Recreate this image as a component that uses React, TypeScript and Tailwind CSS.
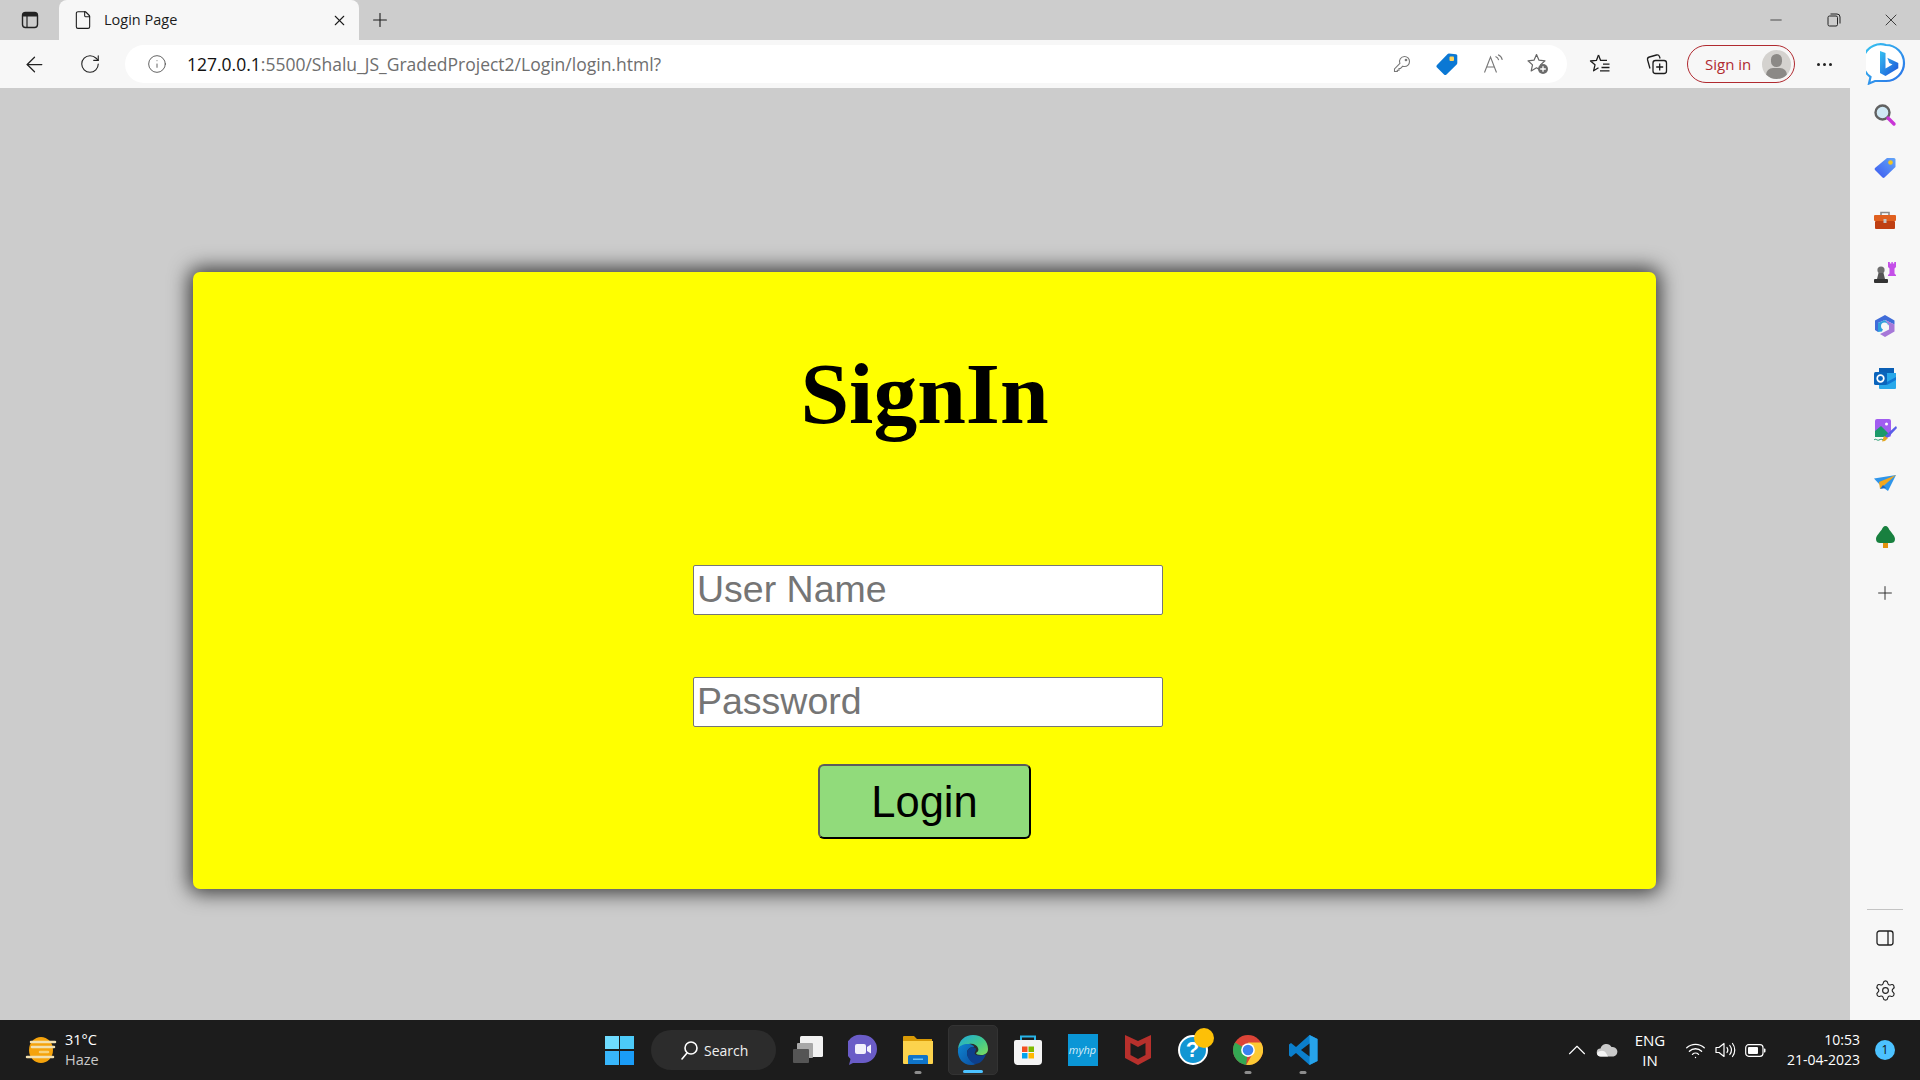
import React from "react";
import { ArrowLeft, RotateCw, Info, Plus, X, Minus, File, Settings, ChevronUp, Wifi } from "lucide-react";

// --- Browser chrome icons ---

const SidebarToggle = () => (
  <svg width="18" height="18" viewBox="0 0 18 18" fill="none">
    <rect x="1.5" y="1.5" width="15" height="15" rx="3" stroke="#222" strokeWidth="1.4" />
    <path d="M1.5 4.5a3 3 0 0 1 3-3h9a3 3 0 0 1 3 3v1h-15z" fill="#222" />
    <path d="M6 5v11" stroke="#222" strokeWidth="1.2" />
  </svg>
);

const RestoreIcon = () => (
  <svg width="14" height="14" viewBox="0 0 14 14" fill="none" stroke="#222" strokeWidth="1">
    <rect x="1" y="3" width="9.5" height="10" rx="1.5" />
    <path d="M3.5 1h6.5a3 3 0 0 1 3 3v6.5" />
  </svg>
);

const KeyIcon = () => (
  <svg width="18" height="18" viewBox="0 0 18 18" fill="none" stroke="#777" strokeWidth="1.1">
    <path d="M11.5 1.5a5 5 0 0 1 0 10c-.6 0-1.2-.1-1.7-.3L7.5 13.5H6v1.7H4.3v1.3H1.5v-2.6l5.4-5.4a5 5 0 0 1 4.6-7z" />
    <circle cx="13" cy="5" r=".8" fill="#777" />
  </svg>
);

const TagIcon = () => (
  <svg width="22" height="24" viewBox="0 0 22 24">
    <path d="M13 1.5 20 2.2a1.5 1.5 0 0 1 1.3 1.4V11a2 2 0 0 1-.6 1.4L10.5 22.4a1.8 1.8 0 0 1-2.5 0L1 15.4a1.8 1.8 0 0 1 0-2.5L11.4 2.2A2 2 0 0 1 13 1.5z" fill="#0b78d4" />
    <rect x="13.5" y="4.5" width="4.5" height="4.5" rx="1" fill="#ffd45c" />
  </svg>
);

const ReadAloudIcon = () => (
  <svg width="24" height="20" viewBox="0 0 22 20" fill="none" stroke="#777" strokeWidth="1.1">
    <path d="M1.5 18.5 7.5 3l6 15.5M3.6 13h7.8" />
    <path d="M12.5 2.5c1.6.6 2.8 2 3.2 3.7M15 .8c2.2.8 3.8 2.8 4.3 5" />
  </svg>
);

const FavAddIcon = () => (
  <svg width="24" height="24" viewBox="0 0 24 24" fill="none">
    <path d="M10.5 2.5 13 8.2l6 .6-4.5 4.1 1.2 6-5.2-3.1-5.3 3.1 1.3-6L2 8.8l6-.6z" stroke="#666" strokeWidth="1.2" strokeLinejoin="round" />
    <circle cx="17" cy="17" r="5" fill="#6b6b6b" />
    <path d="M17 14.2v5.6M14.2 17h5.6" stroke="#fff" strokeWidth="1.3" />
  </svg>
);

const FavoritesIcon = () => (
  <svg width="22" height="22" viewBox="0 0 22 22" fill="none" stroke="#1c1c1c" strokeWidth="1.3" strokeLinejoin="round">
    <path d="M9.5 2 7.4 7.4 1.5 8l4.5 3.8-1.4 6 4.9-3" />
    <path d="M9.5 2l2.1 5.4H18" />
    <path d="M14 11.2h6.5M12.5 14.5h8M11 17.8h9.5" />
  </svg>
);

const CollectionsIcon = () => (
  <svg width="22" height="22" viewBox="0 0 22 22" fill="none" stroke="#1c1c1c" strokeWidth="1.3">
    <rect x="7" y="7.5" width="13.5" height="13" rx="2.5" />
    <path d="M13.7 10.5v7M10.2 14h7" />
    <path d="M4 15.5 1.6 7a2.5 2.5 0 0 1 1.8-3L10.5 2a2.5 2.5 0 0 1 3 1.6l.6 1.9" />
  </svg>
);

const BingIcon = () => (
  <svg width="40" height="42" viewBox="0 0 40 42" fill="none">
    <defs>
      <linearGradient id="bingRing" x1="0" y1="0" x2="1" y2="1">
        <stop offset="0" stopColor="#36c5f0" />
        <stop offset="1" stopColor="#2b6fe8" />
      </linearGradient>
      <linearGradient id="bingB" x1="0" y1="0" x2="1" y2="1">
        <stop offset="0" stopColor="#35c1f1" />
        <stop offset="1" stopColor="#1b4fd8" />
      </linearGradient>
    </defs>
    <path d="M20 2a18 18 0 0 1 0 36H9l-6 2.5 1.5-6.5A18 18 0 0 1 20 2z" fill="#fff" stroke="url(#bingRing)" strokeWidth="2.2" />
    <path d="M14 8l5.5 2v15.5l7-4-3.2-1.6-2-5.2 11 5.2v5.4L19.5 33 14 30z" fill="url(#bingB)" />
  </svg>
);

// --- Edge sidebar icons ---

const SideSearch = () => (
  <svg width="24" height="24" viewBox="0 0 24 24">
    <circle cx="9.5" cy="9.5" r="7" fill="#cfe8f5" stroke="#616161" strokeWidth="2.4" />
    <path d="M15 15l6 6" stroke="#c935d6" strokeWidth="3.4" strokeLinecap="round" />
  </svg>
);

const SideTag = () => (
  <svg width="24" height="24" viewBox="0 0 24 24">
    <defs>
      <linearGradient id="sideTag" x1="0" y1="1" x2="1" y2="0">
        <stop offset="0" stopColor="#3b58f0" />
        <stop offset="1" stopColor="#63a6f8" />
      </linearGradient>
    </defs>
    <path d="M14 2h7a1.5 1.5 0 0 1 1.5 1.5V11L11.5 21.5a1.5 1.5 0 0 1-2 0L2 14a1.5 1.5 0 0 1 0-2z" fill="url(#sideTag)" />
    <circle cx="17.5" cy="6.5" r="2.3" fill="#f5c51e" />
  </svg>
);

const SideToolbox = () => (
  <svg width="24" height="24" viewBox="0 0 24 24">
    <path d="M8 7V3.5h8V7" fill="none" stroke="#8a8a8a" strokeWidth="1.6" />
    <rect x="1" y="6" width="22" height="6" rx="1" fill="#e0601f" />
    <rect x="2" y="12" width="20" height="8" rx="1" fill="#bf3f12" />
    <rect x="10.5" y="10" width="3" height="4" fill="#c4c4c4" />
  </svg>
);

const SideChess = () => (
  <svg width="24" height="24" viewBox="0 0 24 24">
    <path d="M15 1h1.800v1.600h1.600V1h1.400v1.600h1.400V1H23v5l-1.500 1.500v5l1.500 1.500v1h-8v-1l1.500-1.500v-5L15 6z" fill="#c44fe8" />
    <circle cx="8" cy="9" r="3.6" fill="#6e6e6e" />
    <path d="M5.5 12h5l1.500 6H4z" fill="#555" />
    <rect x="1" y="18" width="14" height="4" rx="1" fill="#333" />
  </svg>
);

const SideM365 = () => (
  <svg width="24" height="24" viewBox="0 0 24 24">
    <path d="M12 1 21.5 6.5v4L12 6 5 9v9l-3-2V6.5z" fill="#3f6cd9" />
    <path d="M12 6l9.500 4.500v7L12 23l-5-3 9-4.500V11z" fill="#a678d8" />
    <path d="M5 9l7-3 4 5-5 1.500-2 5L5 18z" fill="#2f9fdc" />
    <circle cx="11.5" cy="12" r="3.5" fill="#f7f7f7" />
  </svg>
);

const SideOutlook = () => (
  <svg width="24" height="24" viewBox="0 0 24 24">
    <rect x="6" y="1" width="15" height="5" fill="#0a5fb5" />
    <path d="M6 6h17v15a1 1 0 0 1-1 1H7a1 1 0 0 1-1-1z" fill="#28a8ea" />
    <path d="M12 16l11-6v3l-9 5z" fill="#0f78d4" />
    <rect x="1" y="5" width="13" height="13" rx="1.5" fill="#0a64bc" />
    <circle cx="7.5" cy="11.5" r="3.3" fill="none" stroke="#fff" strokeWidth="1.7" />
  </svg>
);

const SideImage = () => (
  <svg width="24" height="24" viewBox="0 0 24 24">
    <rect x="2" y="0" width="16" height="18" rx="2" fill="#a15df0" />
    <circle cx="13.5" cy="5" r="1.5" fill="#fff" />
    <path d="M2 12l6-5 7 7v4H2z" fill="#1c9a6a" />
    <path d="M23 7 13 16l-2 4 4-1.500L24 9z" fill="#5a5de8" />
    <path d="M11 17l4 2-3 3-3 .5z" fill="#e6a822" />
    <path d="M1 21c2-2 3 1 5 0s3-1 4 0" stroke="#1c9a6a" strokeWidth="1" fill="none" />
  </svg>
);

const SideSend = () => (
  <svg width="24" height="24" viewBox="0 0 24 24">
    <path d="M1 6.5 23 3 15 19 8 14z" fill="#2f95ea" />
    <path d="M23 3 6 10l1 7z" fill="#f2a71e" />
    <path d="M7 17l3-4 3 3z" fill="#1769c7" />
  </svg>
);

const SideTree = () => (
  <svg width="24" height="24" viewBox="0 0 24 24">
    <rect x="10" y="17" width="5" height="6" fill="#e5930f" />
    <path d="M12.500 1c2 0 3 2 4 4 1.500 2 5.500 6 5.500 9 0 3-2 4-4 4H7c-2 0-4-1-4-4 0-3 4-7 5.500-9 1-2 2-4 4-4z" fill="#18803f" />
  </svg>
);

const SplitIcon = () => (
  <svg width="18" height="16" viewBox="0 0 18 16" fill="none" stroke="#222" strokeWidth="1.3">
    <rect x="1" y="1" width="16" height="14" rx="2.5" />
    <path d="M12 1v14" />
  </svg>
);

// --- Taskbar icons ---

const WeatherIcon = () => (
  <svg width="34" height="28" viewBox="0 0 34 28">
    <ellipse cx="17" cy="14" rx="12" ry="13" fill="#f5a30c" />
    <path d="M7 6h24M8 11h22M3 21h26" stroke="#f2e0b0" strokeWidth="2.5" strokeLinecap="round" />
    <path d="M16 16h8" stroke="#f7d27a" strokeWidth="2.5" strokeLinecap="round" />
  </svg>
);

const WindowsLogo = () => (
  <div className="grid grid-cols-2 gap-[1.5px] w-[29px] h-[29px]">
    <div className="bg-[#6fdcff]" />
    <div className="bg-[#4ccaf8]" />
    <div className="bg-[#38b6fb]" />
    <div className="bg-[#1a9cf7]" />
  </div>
);

const SearchGlass = () => (
  <svg width="19" height="20" viewBox="0 0 19 20" fill="none" stroke="#fff" strokeWidth="1.6">
    <circle cx="11" cy="8" r="6" />
    <path d="M7 13 2 19" strokeLinecap="round" />
  </svg>
);

const TaskView = () => (
  <svg width="32" height="30" viewBox="0 0 32 30">
    <rect x="8" y="1" width="23" height="21" rx="1.5" fill="#f2f2f2" />
    <rect x="5" y="8" width="16" height="15" rx="1" fill="#a8a8a8" />
    <rect x="1" y="14" width="16" height="14" rx="1" fill="#555" />
  </svg>
);

const ChatIcon = () => (
  <svg width="30" height="32" viewBox="0 0 30 32">
    <path d="M15 1a14 14 0 0 1 0 28H5l-4 2 1.500-6A14 14 0 0 1 15 1z" fill="#6a5cc7" />
    <rect x="7" y="10" width="11" height="10" rx="2" fill="#f2f0fb" />
    <path d="M19 13l4-2.500v9L19 17z" fill="#f2f0fb" />
  </svg>
);

const ExplorerIcon = () => (
  <svg width="30" height="30" viewBox="0 0 30 30">
    <path d="M0 2a1 1 0 0 1 1-1h10l3 3h15v6H0z" fill="#d99a06" />
    <path d="M0 6h30v22a1 1 0 0 1-1 1H1a1 1 0 0 1-1-1z" fill="#fcd34d" />
    <path d="M5 21.5a1.5 1.5 0 0 1 1.5-1.5h17a1.5 1.5 0 0 1 1.5 1.5V29H5z" fill="#0f74c9" />
    <rect x="10" y="23.5" width="10" height="1.5" fill="#6cc1f5" />
  </svg>
);

const EdgeIcon = () => (
  <svg width="32" height="32" viewBox="0 0 32 32">
    <defs>
      <linearGradient id="edgeOuter" x1="0" y1="0" x2="1" y2="1">
        <stop offset="0" stopColor="#1ea8e0" />
        <stop offset="0.55" stopColor="#42c98b" />
        <stop offset="1" stopColor="#7fdc5e" />
      </linearGradient>
      <linearGradient id="edgeInner" x1="0" y1="0" x2="1" y2="1">
        <stop offset="0" stopColor="#0e84d0" />
        <stop offset="1" stopColor="#0c4ea0" />
      </linearGradient>
    </defs>
    <path d="M1 15C2 6 8 1 16 1c9 0 15 6 15 14 0 4-3 6-7 6-3 0-5-1-5-2 2-1 3-3 2-5-1-3-5-5-9-4C6 11 2 13 1 15z" fill="url(#edgeOuter)" />
    <path d="M1 15c1-3 5-5 10-5 4 0 6 2 6 3-5 0-7 3-7 6 0 4 4 9 9 11-2 1-4 1-5 1C6 31 0 24 1 15z" fill="url(#edgeInner)" />
    <path d="M10 19c0-3 2-5 5-6 2 0 4 1 4 2 0 2-2 4-1 5 2 2 7 2 11 0-2 6-6 10-11 10-5-2-8-7-8-11z" fill="#0d3f8c" />
  </svg>
);

const StoreIcon = () => (
  <svg width="30" height="32" viewBox="0 0 30 32">
    <path d="M8 7V2.500h14V7" fill="none" stroke="#27b4e8" strokeWidth="2" />
    <path d="M1 8a2 2 0 0 1 2-2h24a2 2 0 0 1 2 2v19a4 4 0 0 1-4 4H5a4 4 0 0 1-4-4z" fill="#f4f4f4" />
    <rect x="9" y="12.5" width="5.5" height="5.5" fill="#f25022" />
    <rect x="15.5" y="12.5" width="5.5" height="5.5" fill="#7fba00" />
    <rect x="9" y="19" width="5.5" height="5.5" fill="#00a4ef" />
    <rect x="15.5" y="19" width="5.5" height="5.5" fill="#ffb900" />
  </svg>
);

const McAfeeIcon = () => (
  <svg width="28" height="32" viewBox="0 0 28 32">
    <path d="M1 1l13 6 13-6v23l-13 7-13-7zM6.500 9v12l7.500 4 7.500-4V9L14 13z" fill="#b8302c" fillRule="evenodd" />
  </svg>
);

const HelpIcon = () => (
  <div className="relative w-[30px] h-[30px] rounded-full bg-[#1296d3] border-2 border-white flex items-center justify-center">
    <span className="font-['Liberation_Sans',sans-serif] font-bold text-[22px] leading-none text-white">?</span>
    <span className="absolute -top-[9px] left-[14px] w-[20px] h-[20px] rounded-full bg-[#fdc007]" />
  </div>
);

const ChromeIcon = () => (
  <svg width="30" height="30" viewBox="0 0 48 48">
    <circle cx="24" cy="24" r="24" fill="#db4437" />
    <path d="M24 24 3.200 12A24 24 0 0 0 21 47.800z" fill="#34a853" />
    <path d="M24 12h20.800A24 24 0 0 1 21 47.800L33 27z" fill="#fcc934" />
    <circle cx="24" cy="24" r="11" fill="#fff" />
    <circle cx="24" cy="24" r="8.5" fill="#3b82f0" />
  </svg>
);

const VSCodeIcon = () => (
  <svg width="30" height="32" viewBox="0 0 30 32">
    <path d="M21.500 1 29.500 5v22l-8 4L8 19l-5 4-2-1.500V10.500L3 9l5 4z" fill="#0b7fcc" />
    <path d="M21.500 1 29.500 5v22l-8 4z" fill="#27a3ea" />
    <path d="M21.500 9.500 13 16l8.500 6.500z" fill="#1c1c1c" />
  </svg>
);

const CloudIcon = () => (
  <svg width="22" height="14" viewBox="0 0 22 14">
    <path d="M5 13.500a4 4 0 0 1-.5-8A6 6 0 0 1 15.500 4a4.800 4.800 0 0 1 2 9.500z" fill="#c9c9c9" />
    <path d="M1 10c3-3 7-3 9 0l2 3.500H5a4 4 0 0 1-4-3.500z" fill="#f4f4f4" />
  </svg>
);

const VolumeIcon = () => (
  <svg width="21" height="18" viewBox="0 0 21 18" fill="none" stroke="#fff" strokeWidth="1.2">
    <path d="M1 6.500h3L9 2.500v13L4 11.500H1z" strokeLinejoin="round" />
    <path d="M12 6.500c1 1.500 1 3.500 0 5M14.800 4.500c2 2.700 2 6.300 0 9M17.500 2.500c3 3.800 3 9.200 0 13" strokeLinecap="round" />
  </svg>
);

const BatteryIcon = () => (
  <svg width="21" height="13" viewBox="0 0 21 13" fill="none">
    <rect x=".7" y=".7" width="17.3" height="11.6" rx="3" stroke="#fff" strokeWidth="1.2" />
    <rect x="3" y="3" width="10" height="7" rx="1" fill="#fff" />
    <path d="M19 4.500h.5a1 1 0 0 1 1 1v2a1 1 0 0 1-1 1H19z" fill="#fff" />
  </svg>
);

// --- Small parts ---

const SEGOE = "font-['Open_Sans','Noto_Sans',sans-serif]";

const ToolSlot: React.FC<any> = ({ w, children }) => (
  <div className="flex items-center justify-center shrink-0" style={{ width: w }}>{children}</div>
);

const TaskIcon: React.FC<any> = ({ running, active, children }) => (
  <div className={`relative flex items-center justify-center w-[50px] h-[50px] mx-[2.5px] rounded-[5px] ${active ? "bg-[#2b2b2b] border border-[#333]" : ""}`}>
    {children}
    {running && <span className={`absolute bottom-[1px] left-1/2 -translate-x-1/2 h-[3px] rounded-full ${active ? "w-[20px] bg-[#4cc2ff]" : "w-[7px] bg-[#8d8d8d]"}`} />}
  </div>
);

const SideSlot: React.FC<any> = ({ children }) => (
  <div className="h-[52.7px] flex items-center justify-center">{children}</div>
);

// --- Page ---

export default function App() {
  return (
    <div className={`w-[1920px] h-[1080px] overflow-hidden flex flex-col bg-[#cccccc] ${SEGOE}`}>
      {/* tab strip */}
      <div className="h-[40px] flex shrink-0 bg-[#cdcdcd]">
        <div className="w-[59px] flex items-center justify-center pl-[1px]"><SidebarToggle /></div>
        <div className="w-[300px] h-[40px] bg-[#f7f7f7] rounded-t-[8px] flex items-center pl-[14px] pr-[11px]">
          <File size={20} strokeWidth={1.3} color="#1c1c1c" />
          <span className="ml-[11px] text-[14.5px] text-[#1c1c1c] flex-1">Login Page</span>
          <X size={17} strokeWidth={1.5} color="#1c1c1c" />
        </div>
        <div className="ml-[10px] flex items-center"><Plus size={22} strokeWidth={1.2} color="#1c1c1c" /></div>
        <div className="flex-1" />
        <div className="flex items-center h-[40px]">
          <div className="w-[57px] flex justify-center pr-[4px]"><Minus size={18} strokeWidth={1} color="#222" /></div>
          <div className="w-[57px] flex justify-center pr-[1px]"><RestoreIcon /></div>
          <div className="w-[57px] pr-[2px] flex justify-center"><X size={20} strokeWidth={1} color="#222" /></div>
        </div>
      </div>

      {/* toolbar */}
      <div className="h-[48px] flex items-center shrink-0 bg-[#f7f7f7]">
        <ToolSlot w={69}><ArrowLeft size={25} strokeWidth={1.2} color="#222" /></ToolSlot>
        <ToolSlot w={41}><RotateCw size={22} strokeWidth={1.2} color="#222" /></ToolSlot>
        <div className="ml-[15px] w-[1442px] h-[38px] rounded-full bg-white flex items-center pl-[22px]">
          <Info size={20} strokeWidth={1} color="#444" />
          <div className="ml-[20px] text-[17.5px] flex-1 text-[#6e6e6e]">
            <span className="text-[#111]">127.0.0.1</span>:5500/Shalu_JS_GradedProject2/Login/login.html?
          </div>
          <ToolSlot w={45}><KeyIcon /></ToolSlot>
          <ToolSlot w={45}><TagIcon /></ToolSlot>
          <ToolSlot w={45}><div className="pl-[4px]"><ReadAloudIcon /></div></ToolSlot>
          <ToolSlot w={45}><div className="pl-[2px]"><FavAddIcon /></div></ToolSlot>
          <div className="w-[8px]" />
        </div>
        <ToolSlot w={57}><div className="pl-[9px]"><FavoritesIcon /></div></ToolSlot>
        <ToolSlot w={56}><div className="pl-[9px]"><CollectionsIcon /></div></ToolSlot>
        <div className="ml-[7px] w-[108px] h-[38px] rounded-full border-[1.5px] border-[#b02a30] flex items-center pl-[17px] pr-[3px]">
          <span className="text-[#b02a30] text-[15px] flex-1">Sign in</span>
          <div className="relative w-[29px] h-[29px] rounded-full bg-[#d4d2cf] overflow-hidden">
            <div className="absolute left-[9px] top-[4px] w-[11px] h-[13px] rounded-full bg-[#8b8986]" />
            <div className="absolute left-[4px] top-[18px] w-[21px] h-[14px] rounded-full bg-[#8b8986]" />
          </div>
        </div>
        <div className="ml-[14px] w-[30px] flex items-center justify-center gap-[3px]">
          <span className="w-[3px] h-[3px] rounded-full bg-[#222]" />
          <span className="w-[3px] h-[3px] rounded-full bg-[#222]" />
          <span className="w-[3px] h-[3px] rounded-full bg-[#222]" />
        </div>
        <div className="flex-1 flex justify-center pl-[12px]"><BingIcon /></div>
      </div>

      {/* page + edge sidebar */}
      <div className="flex-1 flex min-h-0">
        <main className="w-[1850px] pt-[184px] bg-[#cccccc]">
          <div className="ml-[193px] w-[1463px] h-[617px] bg-[#ffff00] rounded-[7px] shadow-[0_0_20px_4px_rgb(0,0,0,0.72)] flex flex-col items-center">
            <h1 className="mt-[62px] h-[120px] font-['Liberation_Serif',serif] font-bold text-[87.5px] leading-[120px] text-black">SignIn</h1>
            <input
              placeholder="User Name"
              className="mt-[111px] ml-[7px] w-[470px] h-[50px] bg-white border border-[#767676] rounded-[2px] px-[3px] pb-[2px] font-['Liberation_Sans',sans-serif] text-[37.5px] outline-none placeholder:text-[#757575]"
            />
            <input
              type="password"
              placeholder="Password"
              className="mt-[62px] ml-[7px] w-[470px] h-[50px] bg-white border border-[#767676] rounded-[2px] px-[3px] pb-[2px] font-['Liberation_Sans',sans-serif] text-[37.5px] outline-none placeholder:text-[#757575]"
            />
            <button className="mt-[37px] w-[213px] h-[75px] pt-[2px] bg-[#91db7b] border-2 border-t-[#5c5c5c] border-l-[#5c5c5c] border-r-black border-b-black rounded-[6px] font-['Liberation_Sans',sans-serif] text-[43.5px] text-black">
              Login
            </button>
          </div>
        </main>
        <aside className="w-[70px] bg-[#f7f7f7] flex flex-col items-center pt-[1px]">
          <SideSlot><SideSearch /></SideSlot>
          <SideSlot><SideTag /></SideSlot>
          <SideSlot><SideToolbox /></SideSlot>
          <SideSlot><SideChess /></SideSlot>
          <SideSlot><SideM365 /></SideSlot>
          <SideSlot><SideOutlook /></SideSlot>
          <SideSlot><SideImage /></SideSlot>
          <SideSlot><SideSend /></SideSlot>
          <SideSlot><SideTree /></SideSlot>
          <div className="mt-[3px]"><SideSlot><Plus size={22} strokeWidth={1} color="#222" /></SideSlot></div>
          <div className="flex-1" />
          <div className="w-[36px] h-px bg-[#c4c4c4]" />
          <div className="h-[52px] mt-[2px] flex items-center justify-center"><SplitIcon /></div>
          <div className="h-[52px] mb-[4px] flex items-center justify-center"><Settings size={23} strokeWidth={1.2} color="#222" /></div>
        </aside>
      </div>

      {/* taskbar */}
      <div className="h-[60px] shrink-0 bg-[#1c1c1c] flex items-center text-white">
        <div className="w-[605px] flex items-center pl-[24px]">
          <WeatherIcon />
          <div className="ml-[7px] text-[14.5px] leading-[20px]">
            <div>31°C</div>
            <div className="text-[#c9c9c9]">Haze</div>
          </div>
        </div>
        <WindowsLogo />
        <div className="ml-[17px] w-[125px] h-[40px] rounded-full bg-[#2c2c2c] flex items-center pl-[29px] text-[14px]">
          <SearchGlass />
          <span className="ml-[5px] text-[#f0f0f0]">Search</span>
        </div>
        <div className="ml-[4px] flex items-center">
          <TaskIcon><TaskView /></TaskIcon>
          <TaskIcon><ChatIcon /></TaskIcon>
          <TaskIcon running><ExplorerIcon /></TaskIcon>
          <TaskIcon running active><EdgeIcon /></TaskIcon>
          <TaskIcon><StoreIcon /></TaskIcon>
          <TaskIcon>
            <div className="w-[30px] h-[32px] bg-[#0a96d6] flex items-center justify-center text-[11px] italic text-[#d8eef9]">myhp</div>
          </TaskIcon>
          <TaskIcon><McAfeeIcon /></TaskIcon>
          <TaskIcon><HelpIcon /></TaskIcon>
          <TaskIcon running><ChromeIcon /></TaskIcon>
          <TaskIcon running><VSCodeIcon /></TaskIcon>
        </div>
        <div className="flex-1" />
        <div className="flex items-center h-full">
          <ChevronUp size={30} strokeWidth={0.9} color="#fff" />
          <div className="ml-[4px]"><CloudIcon /></div>
          <div className="ml-[10px] w-[44px] text-center text-[15px] leading-[20px]">
            <div>ENG</div>
            <div>IN</div>
          </div>
          <div className="ml-[13px]"><Wifi size={21} strokeWidth={1.5} color="#fff" /></div>
          <div className="ml-[9px]"><VolumeIcon /></div>
          <div className="ml-[9px]"><BatteryIcon /></div>
          <div className="ml-[7px] w-[87px] text-right text-[14px] leading-[20px]">
            <div>10:53</div>
            <div>21-04-2023</div>
          </div>
          <div className="ml-[15px] mr-[25px] w-[20px] h-[20px] rounded-full bg-[#4cc2ff] text-[#111] text-[12px] flex items-center justify-center">1</div>
        </div>
      </div>
    </div>
  );
}
